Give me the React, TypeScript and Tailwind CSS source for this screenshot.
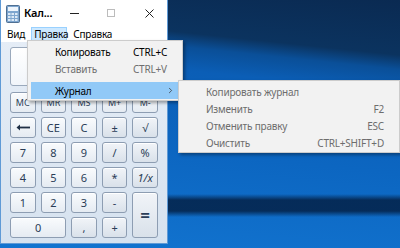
import { ChevronRight } from "lucide-react";

type Key = { label: string; kind?: "num" | "op" | "mem"; span?: string };

const rows: Key[] = [
  { label: "MC", kind: "mem" },
  { label: "MR", kind: "mem" },
  { label: "MS", kind: "mem" },
  { label: "M+", kind: "mem" },
  { label: "M-", kind: "mem" },
  { label: "←", kind: "num" },
  { label: "CE", kind: "num" },
  { label: "C", kind: "num" },
  { label: "±", kind: "op" },
  { label: "√", kind: "op" },
  { label: "7" },
  { label: "8" },
  { label: "9" },
  { label: "/", kind: "op" },
  { label: "%", kind: "op" },
  { label: "4" },
  { label: "5" },
  { label: "6" },
  { label: "*", kind: "op" },
  { label: "1/x", kind: "op" },
  { label: "1" },
  { label: "2" },
  { label: "3" },
  { label: "-", kind: "op" },
  { label: "=", kind: "op", span: "row-span-2" },
  { label: "0", span: "col-span-2" },
  { label: ",", kind: "op" },
  { label: "+", kind: "op" },
];

const CalcIcon = () => (
  <svg width="14" height="18" viewBox="0 0 14 18" aria-hidden="true">
    <rect x="0.5" y="0.5" width="13" height="17" rx="1" fill="#7ea6cf" stroke="#4f6f92" />
    <rect x="2" y="2" width="10" height="4" fill="#eef5fc" />
    {[0, 1, 2].map((r) =>
      [0, 1, 2].map((c) => (
        <rect key={`${r}-${c}`} x={2 + c * 3.5} y={8 + r * 3} width="2.5" height="2" fill="#dce9f6" />
      ))
    )}
  </svg>
);

// Стрелка backspace
const BackArrow = () => (
  <svg width="14" height="7" viewBox="0 0 14 7" aria-hidden="true">
    <path d="M4 0.5 L0.5 3.5 L4 6.5 Z" fill="#1f2f45" />
    <rect x="3" y="2.6" width="11" height="1.8" fill="#1f2f45" />
  </svg>
);

const Btn = ({ k }: { k: Key }) => {
  const op = k.kind === "op";
  return (
    <div
      className={`${k.span ?? ""} flex items-center justify-center rounded-[3px] border border-[#8d9db2] shadow-[inset_0_1px_0_#ffffff] ${
        op
          ? "bg-[linear-gradient(to_bottom,#f1f4f8,#d9e1ea)]"
          : "bg-[linear-gradient(to_bottom,#f9fbfd,#e5ebf2)]"
      } ${k.kind === "mem" ? "text-[9px]" : k.label === "=" ? "text-[17px] font-semibold" : "text-[11px]"} ${
        k.label === "1/x" ? "italic" : ""
      } leading-none text-[#2a3d57]`}
    >
      {k.label === "←" ? <BackArrow /> : k.label}
    </div>
  );
};

export default function App() {
  return (
    <div className="relative w-[400px] h-[248px] overflow-hidden font-['Noto_Sans','Open_Sans',sans-serif] bg-[linear-gradient(to_bottom,transparent_194px,rgba(3,28,62,0.8)_200px,rgba(3,28,62,0.8)_211px,transparent_217px),linear-gradient(186deg,#0a2a52_0%,#0b335f_19%,#0a4f98_24%,#0b5eb6_32%,#0c66c1_60%,#1274d0_100%)]">
      {/* Окно калькулятора */}
      <div className="flex flex-col w-[168px] h-[244px] border border-t-0 border-[#5f9ad6] bg-[linear-gradient(to_bottom,#e8eff8,#d6e2ef)]">
        {/* Заголовок */}
        <div className="flex items-center h-[26px] bg-white">
          <div className="ml-[5px] mt-[1px]">
            <CalcIcon />
          </div>
          <span className="ml-[4px] text-[11px] font-semibold text-black tracking-[-0.2px]">Кал...</span>
          <div className="ml-[18px] w-[9px] h-px bg-[#222]" />
          <div className="ml-[28px] w-[8px] h-[8px] border border-[#bcbcbc]" />
          <svg className="ml-[30px]" width="9" height="9" viewBox="0 0 9 9" aria-hidden="true">
            <path d="M0.5 0.5 L8.5 8.5 M8.5 0.5 L0.5 8.5" stroke="#222" strokeWidth="1" />
          </svg>
        </div>

        {/* Меню */}
        <div className="flex items-center h-[16px] bg-white text-[10px] tracking-[-0.2px] text-black leading-none">
          <span className="ml-[6px]">Вид</span>
          <span className="ml-[6px] h-[15px] w-[36px] pl-[2px] flex items-center border border-[#99d1ff] bg-[#cce8ff]">Правка</span>
          <span className="ml-[6px]">Справка</span>
        </div>

        {/* Тело */}
        <div className="flex flex-col px-[9px] pt-[5px] gap-[6px]">
          <div className="h-[39px] rounded-[3px] border border-[#9aa9bc] bg-[linear-gradient(to_bottom,#ffffff,#f1f5fa)]" />
          <div className="grid grid-cols-5 auto-rows-[21px] gap-x-[5px] gap-y-[4px]">
            {rows.map((k) => (
              <Btn key={k.label} k={k} />
            ))}
          </div>
        </div>
      </div>

      {/* Меню Правка */}
      <div className="absolute left-[27px] top-[40px] w-[156px] border border-[#cccccc] bg-[#f2f2f2] pt-[2px] pb-[1px] shadow-[2px_2px_3px_rgba(0,0,0,0.35)] text-[10px] tracking-[-0.2px] leading-none">
        <div className="flex items-center h-[17px] px-[3px]">
          <span className="pl-[24px] w-[102px] text-black">Копировать</span>
          <span className="text-black">CTRL+C</span>
        </div>
        <div className="flex items-center h-[17px] px-[3px]">
          <span className="pl-[24px] w-[102px] text-[#6d6d6d]">Вставить</span>
          <span className="text-[#6d6d6d]">CTRL+V</span>
        </div>
        <div className="h-[5px]" />
        <div className="flex items-center h-[17px] mx-[3px] bg-[#91c9f7]">
          <span className="pl-[24px] flex-1 text-black">Журнал</span>
          <ChevronRight className="w-[9px] h-[9px] mr-[4px] text-[#333]" strokeWidth={2} />
        </div>
      </div>

      {/* Подменю Журнал */}
      <div className="absolute left-[178px] top-[80px] w-[222px] border border-[#cccccc] bg-[#f2f2f2] pt-[2px] pb-[1px] shadow-[2px_2px_3px_rgba(0,0,0,0.35)] text-[10px] tracking-[-0.2px] leading-none text-[#6d6d6d]">
        {[
          ["Копировать журнал", ""],
          ["Изменить", "F2"],
          ["Отменить правку", "ESC"],
          ["Очистить", "CTRL+SHIFT+D"],
        ].map(([t, s]) => (
          <div key={t} className="flex items-center justify-between h-[17px] pl-[27px] pr-[15px]">
            <span>{t}</span>
            <span>{s}</span>
          </div>
        ))}
      </div>
    </div>
  );
}
